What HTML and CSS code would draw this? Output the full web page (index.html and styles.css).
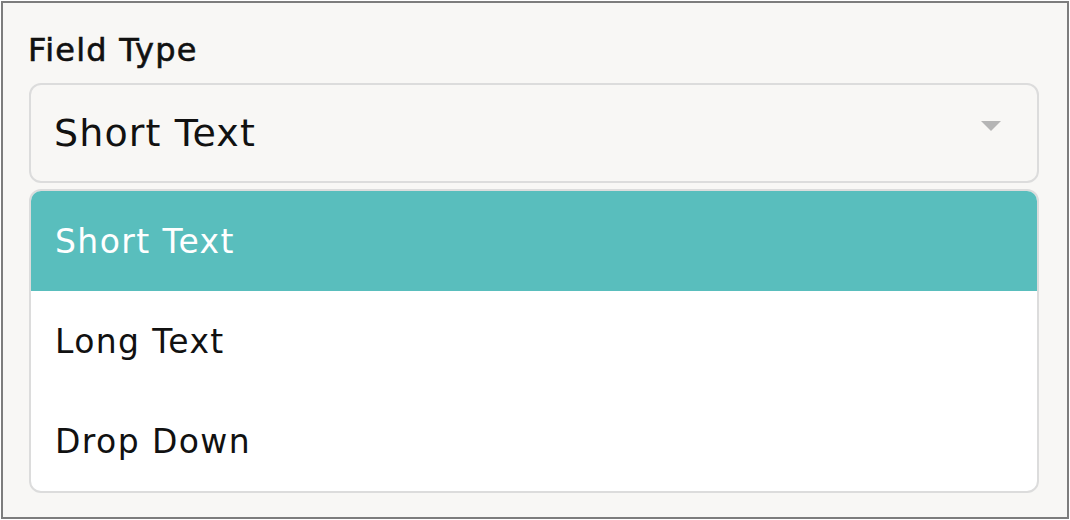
FILE: index.html
```html
<!DOCTYPE html>
<html lang="en">
<head>
<meta charset="utf-8">
<title>Field Type</title>
<link rel="stylesheet" href="styles.css">
</head>
<body>
<div class="frame">
  <div class="label">Field Type</div>
  <div class="select">
    <span class="select-value">Short Text</span>
    <svg class="caret" width="20" height="10" viewBox="0 0 20 10" aria-hidden="true"><polygon points="0,0 20,0 10,10" fill="#b5b5b5"/></svg>
  </div>
  <ul class="menu">
    <li class="option active">Short Text</li>
    <li class="option">Long Text</li>
    <li class="option">Drop Down</li>
  </ul>
</div>
</body>
</html>
```
FILE: styles.css
```css
html, body {
  margin: 0;
  padding: 0;
  background: #ffffff;
}

body {
  font-family: "DejaVu Sans", "Liberation Sans", sans-serif;
  color: #111111;
}

.frame {
  box-sizing: border-box;
  width: 1068px;
  height: 518px;
  margin: 1px;
  border: 2px solid #7d7d7d;
  background: #f8f7f5;
  padding: 27px 28px 0 26px;
  display: flex;
  flex-direction: column;
}

.label {
  font-size: 32px;
  line-height: 40px;
  letter-spacing: 1.2px;
  text-indent: -1px;
  color: #111111;
  -webkit-text-stroke: 0.6px #111111;
}

.select {
  box-sizing: border-box;
  margin-top: 13px;
  height: 100px;
  border: 2px solid #dcdcdc;
  border-radius: 12px;
  background: #f8f7f5;
  display: flex;
  align-items: center;
  justify-content: space-between;
  padding: 0 36px 0 23px;
}

.select-value {
  font-size: 38px;
  line-height: 46px;
  letter-spacing: 1.1px;
  color: #111111;
}

.caret {
  display: block;
  margin-top: -14px;
}

.menu {
  list-style: none;
  margin: 6px 0 0 0;
  padding: 0;
  border: 2px solid #dcdcdc;
  border-radius: 12px;
  background: #ffffff;
  overflow: hidden;
}

.option {
  height: 100px;
  display: flex;
  align-items: center;
  padding: 0 24px;
  font-size: 33px;
  letter-spacing: 1.4px;
  color: #111111;
}

.option.active {
  background: #59bebd;
  color: #ffffff;
}
```
